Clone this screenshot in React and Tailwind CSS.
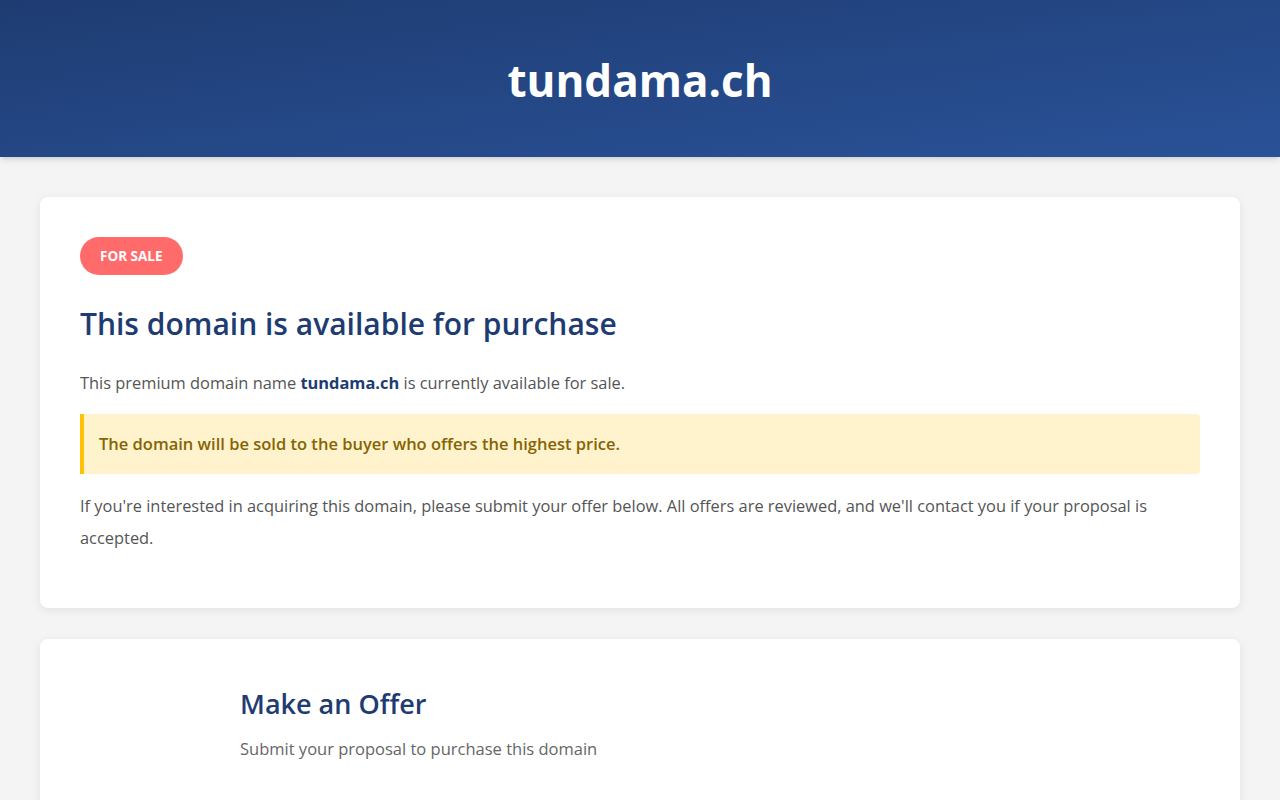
export default function App() {
  const font = { fontFamily: '"Segoe UI", "Open Sans", sans-serif' };
  return (
    <div className="min-h-screen bg-[#f4f4f4] text-[#333]" style={font}>
      <header className="h-[157px] flex items-center justify-center bg-gradient-to-br from-[#1e3c72] to-[#2a5298] shadow-md">
        <h1 className="text-[44px] font-bold text-white leading-none mt-[2px]">tundama.ch</h1>
      </header>

      <main className="px-10 pt-10 flex flex-col gap-[31px]">
        <section className="bg-white rounded-lg shadow-[0_2px_10px_rgba(0,0,0,0.08)] px-10 pt-10 pb-[54px]">
          <span className="inline-flex items-center h-[38px] px-5 rounded-full bg-[#ff6b6b] text-white text-[13.5px] font-bold uppercase">
            For Sale
          </span>
          <h2 className="mt-[31px] text-[30px] font-semibold text-[#1e3c72] leading-[36px]">
            This domain is available for purchase
          </h2>
          <p className="mt-[25px] text-[16.4px] text-[#555] leading-[32px]">
            This premium domain name <strong className="text-[#1e3c72] font-bold">tundama.ch</strong> is currently available for sale.
          </p>
          <div className="mt-[15px] bg-[#fff3cd] border-l-4 border-[#ffc107] rounded-r px-[15px] h-[60px] flex items-center">
            <p className="text-[16.5px] font-semibold text-[#856404]">
              The domain will be sold to the buyer who offers the highest price.
            </p>
          </div>
          <p className="mt-[16px] text-[16.4px] text-[#555] leading-[32px]">
            If you're interested in acquiring this domain, please submit your offer below. All offers are reviewed, and we'll contact you if your proposal is accepted.
          </p>
        </section>

        <section className="bg-white rounded-lg shadow-[0_2px_10px_rgba(0,0,0,0.08)] p-10">
          <div className="max-w-[800px] mx-auto">
            <h2 className="mt-[9px] text-[27px] font-semibold text-[#1e3c72] leading-[32px]">Make an Offer</h2>
            <p className="mt-[17px] text-[16.5px] text-[#666] leading-[24px]">Submit your proposal to purchase this domain</p>
            <div className="h-[200px]" />
          </div>
        </section>
      </main>
    </div>
  );
}
